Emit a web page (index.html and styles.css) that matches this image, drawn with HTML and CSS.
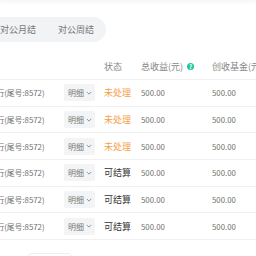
FILE: index.html
```html
<!DOCTYPE html>
<html lang="zh-CN">

<head>
    <meta charset="UTF-8">
    <meta name="viewport" content="width=device-width, initial-scale=1.0">
    <title>结算明细</title>
    <link rel="stylesheet" href="styles.css">
</head>

<body>
    <div class="topbar"></div>

    <div class="tabs">
        <span class="tab">对公月结</span>
        <span class="tab">对公周结</span>
    </div>

    <div class="table-wrap">
        <div class="table">
            <div class="row head">
                <span></span>
                <span></span>
                <span>状态</span>
                <span class="with-tip">总收益(元) <i class="tip">?</i></span>
                <span>创收基金(元)</span>
            </div>

            <div class="row">
                <span class="card">招商银行(尾号:8572)</span>
                <span><span class="detail">明细<svg class="chev" viewBox="0 0 8 5" width="6" height="4"><path d="M1 1l3 3 3-3" fill="none" stroke="#888" stroke-width="1.2"/></svg></span></span>
                <span class="st-wait">未处理</span>
                <span class="num">500.00</span>
                <span class="num">500.00</span>
            </div>
            <div class="row">
                <span class="card">招商银行(尾号:8572)</span>
                <span><span class="detail">明细<svg class="chev" viewBox="0 0 8 5" width="6" height="4"><path d="M1 1l3 3 3-3" fill="none" stroke="#888" stroke-width="1.2"/></svg></span></span>
                <span class="st-wait">未处理</span>
                <span class="num">500.00</span>
                <span class="num">500.00</span>
            </div>
            <div class="row">
                <span class="card">招商银行(尾号:8572)</span>
                <span><span class="detail">明细<svg class="chev" viewBox="0 0 8 5" width="6" height="4"><path d="M1 1l3 3 3-3" fill="none" stroke="#888" stroke-width="1.2"/></svg></span></span>
                <span class="st-wait">未处理</span>
                <span class="num">500.00</span>
                <span class="num">500.00</span>
            </div>
            <div class="row">
                <span class="card">招商银行(尾号:8572)</span>
                <span><span class="detail">明细<svg class="chev" viewBox="0 0 8 5" width="6" height="4"><path d="M1 1l3 3 3-3" fill="none" stroke="#888" stroke-width="1.2"/></svg></span></span>
                <span class="st-ok">可结算</span>
                <span class="num">500.00</span>
                <span class="num">500.00</span>
            </div>
            <div class="row">
                <span class="card">招商银行(尾号:8572)</span>
                <span><span class="detail">明细<svg class="chev" viewBox="0 0 8 5" width="6" height="4"><path d="M1 1l3 3 3-3" fill="none" stroke="#888" stroke-width="1.2"/></svg></span></span>
                <span class="st-ok">可结算</span>
                <span class="num">500.00</span>
                <span class="num">500.00</span>
            </div>
            <div class="row">
                <span class="card">招商银行(尾号:8572)</span>
                <span><span class="detail">明细<svg class="chev" viewBox="0 0 8 5" width="6" height="4"><path d="M1 1l3 3 3-3" fill="none" stroke="#888" stroke-width="1.2"/></svg></span></span>
                <span class="st-ok">可结算</span>
                <span class="num">500.00</span>
                <span class="num">500.00</span>
            </div>
        </div>
    </div>

    <div class="footer">
        <button class="more-btn"></button>
    </div>
</body>

</html>
```

FILE: styles.css
```css
body {
    margin: 0;
    font-family: "Noto Sans CJK SC", "Noto Sans", sans-serif;
    font-size: 9px;
    color: #666;
    background: #fff;
    overflow: hidden;
}

.topbar {
    height: 0;
    box-shadow: 0 0 4px 1px rgba(0, 0, 0, 0.1);
}

.tabs {
    display: inline-flex;
    margin: 17px 0 0 -14px;
    height: 25px;
    align-items: center;
    background-color: #f2f3f5;
    border-radius: 13px;
}

.tab {
    padding: 0 12px 0 14px;
    color: #777;
    line-height: 25px;
}

.tab + .tab {
    padding-left: 10px;
}

.table-wrap {
    margin-top: 11px;
    overflow: hidden;
}

.table {
    margin-left: -40px;
    width: 340px;
}

.row {
    display: grid;
    grid-template-columns: 104px 40px 37px 71px 88px;
    align-items: center;
    height: 26.7px;
    box-sizing: border-box;
    border-bottom: 1px solid #f0f0f0;
}

.head {
    height: 27px;
    color: #888;
}

.card {
    padding-left: 13px;
    white-space: nowrap;
    font-size: 7.8px;
    color: #707070;
}

.detail {
    display: inline-flex;
    align-items: center;
    gap: 2px;
    height: 17px;
    padding: 0 3px 0 4px;
    background-color: #f3f4f6;
    color: #777;
    border-radius: 2px;
    font-size: 8px;
}

.chev {
    display: block;
}

.st-wait {
    color: #f5a04a;
}

.st-ok {
    color: #333;
}

.num {
    font-size: 7.8px;
    color: #707070;
}

.with-tip {
    display: flex;
    align-items: center;
    white-space: nowrap;
}

.tip {
    display: inline-block;
    width: 7px;
    height: 7px;
    margin-left: 4px;
    border-radius: 50%;
    background-color: #1fc7a0;
    color: #fff;
    font-size: 6px;
    font-style: normal;
    line-height: 7px;
    text-align: center;
    font-weight: bold;
}

.footer {
    padding: 13px 0 0 28px;
}

.more-btn {
    display: block;
    width: 44px;
    height: 24px;
    border: 1px solid #eee;
    border-radius: 4px;
    background: #fff;
}
```
